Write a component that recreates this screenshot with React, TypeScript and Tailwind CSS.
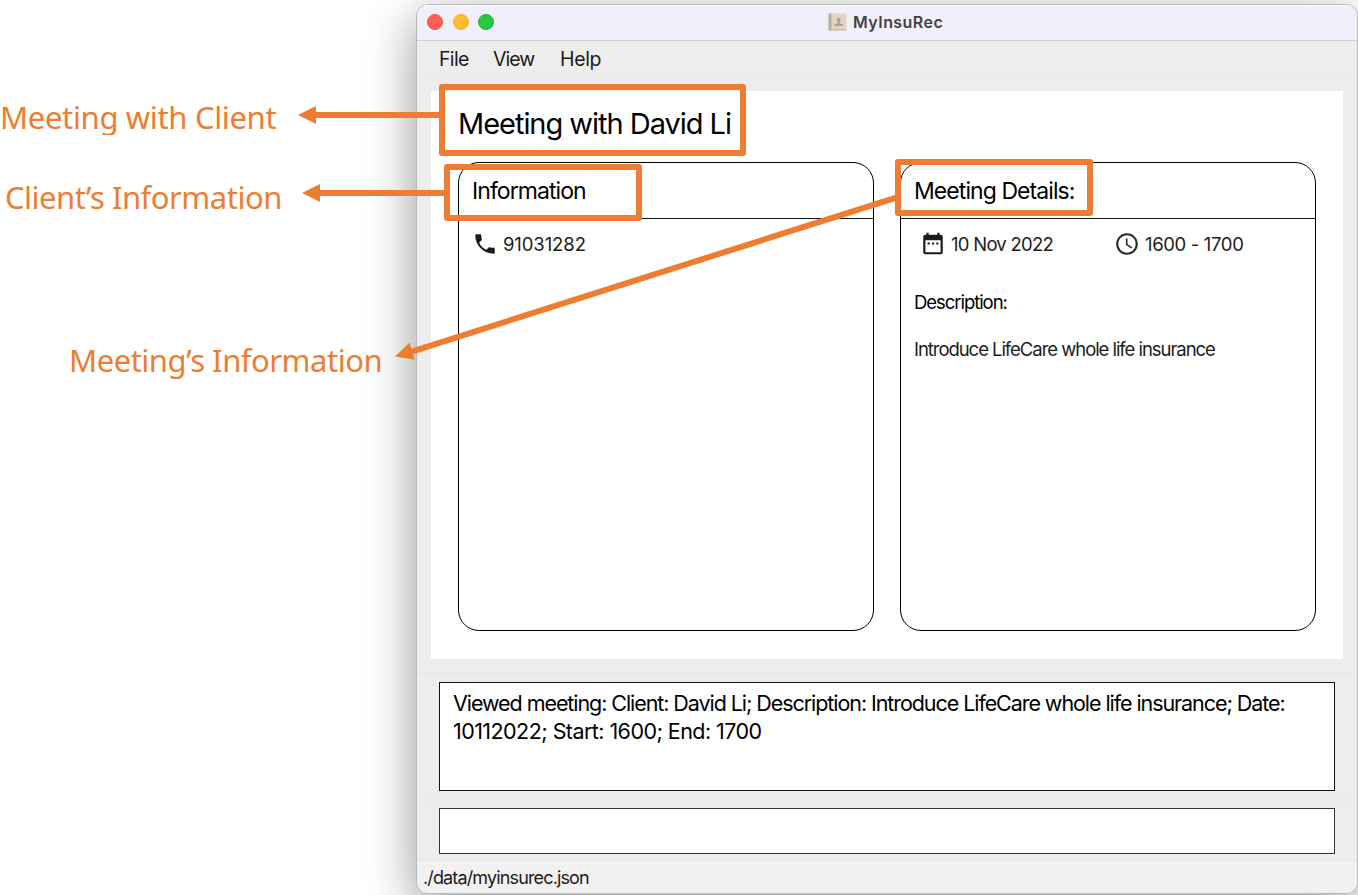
import React from "react";

function PhoneIcon() {
  return (
    <svg className="h-[26px] w-[26px] shrink-0" viewBox="0 0 24 24" fill="#1c1c1c">
      <path d="M6.62 10.79c1.44 2.83 3.76 5.14 6.59 6.59l2.2-2.2c.27-.27.67-.36 1.02-.24 1.12.37 2.33.57 3.57.57.55 0 1 .45 1 1V20c0 .55-.45 1-1 1-9.39 0-17-7.61-17-17 0-.55.45-1 1-1h3.5c.55 0 1 .45 1 1 0 1.25.2 2.45.57 3.57.11.35.03.74-.25 1.02l-2.2 2.2z" />
    </svg>
  );
}

function CalendarIcon() {
  return (
    <svg className="h-[26px] w-[26px] shrink-0" viewBox="0 0 24 24" fill="#1c1c1c">
      <path d="M9 10.5H7v2h2v-2zm4 0h-2v2h2v-2zm4 0h-2v2h2v-2zm2-7h-1v-2h-2v2H8v-2H6v2H5c-1.11 0-1.99.9-1.99 2L3 19.5c0 1.1.89 2 2 2h14c1.1 0 2-.9 2-2v-14c0-1.1-.9-2-2-2zm0 16H5v-11h14v11z" />
    </svg>
  );
}

function ClockIcon() {
  return (
    <svg className="h-[26px] w-[26px] shrink-0" viewBox="0 0 24 24" fill="#2a2a2a">
      <path d="M11.99 2C6.47 2 2 6.48 2 12s4.47 10 9.99 10C17.52 22 22 17.52 22 12S17.52 2 11.99 2zM12 20c-4.42 0-8-3.58-8-8s3.58-8 8-8 8 3.58 8 8-3.58 8-8 8zm.5-13H11v6l5.25 3.15.75-1.23-4.5-2.67z" />
    </svg>
  );
}

function AppIcon() {
  return (
    <svg className="h-[18px] w-[19px] shrink-0" viewBox="0 0 19 18">
      <rect x="0.5" y="0.5" width="18" height="17" rx="1" fill="#e4d3bd" />
      <rect x="0.5" y="0.5" width="3" height="17" rx="0.5" fill="#b5afac" />
      <rect x="3.5" y="15.8" width="15" height="1.7" fill="#d0c2b2" />
      <circle cx="10.7" cy="7" r="2" fill="#a99f97" />
      <path d="M9.7 8h2v2.2l3.4 1.2v1.6H6.4v-1.6l3.3-1.2z" fill="#a99f97" />
    </svg>
  );
}

function Dot({ color }: { color: string }) {
  return <span className={`h-4 w-4 rounded-full border ${color}`} />;
}

function Card({ title, children }: { title: React.ReactNode; children: React.ReactNode }) {
  return (
    <section className="flex h-[469px] w-[416px] flex-col rounded-[21px] border-[1.33px] border-black">
      <header className="h-[56px] border-b border-[#111] pl-[13px] pt-[10px] text-[23px] leading-[36px] tracking-[-0.93px]">
        {title}
      </header>
      {children}
    </section>
  );
}

function Annotations() {
  return (
    <div className="pointer-events-none absolute inset-0 text-[31px] leading-[40px] text-[#ED7D31] font-['Noto_Sans',sans-serif]">
      <div className="absolute left-0 top-[97px] h-[38px] overflow-hidden whitespace-nowrap tracking-[-0.34px]">Meeting with Client</div>
      <div className="absolute left-[5px] top-[177px] whitespace-nowrap tracking-[-0.5px]">Client’s Information</div>
      <div className="absolute left-[69px] top-[340px] whitespace-nowrap tracking-[-0.48px]">Meeting’s Information</div>
      <div className="absolute left-[439px] top-[84px] h-[72px] w-[307px] rounded-[3px] border-[6px] border-[#ED7D31]" />
      <div className="absolute left-[444px] top-[164px] h-[57px] w-[198px] rounded-[3px] border-[6px] border-[#ED7D31]" />
      <div className="absolute left-[895px] top-[159px] h-[57px] w-[198px] rounded-[3px] border-[6px] border-[#ED7D31]" />
      <svg className="absolute left-0 top-0 h-[895px] w-[1358px]" viewBox="0 0 1358 895" fill="#ED7D31" stroke="none">
        <path d="M298 115l18-9v6h124v6H316v6z" />
        <path d="M302 193l18-9v6h125v6H320v6z" />
        <path d="M395 356.5l14.5-13.7 5.3 17z" />
        <path d="M411 351.8L897 197.3" stroke="#ED7D31" strokeWidth="6" />
      </svg>
    </div>
  );
}

export default function App() {
  return (
    <div className="relative h-[895px] w-[1358px] overflow-hidden bg-white pl-[416px] pt-1 font-['Inter','Liberation_Sans',sans-serif] text-black">
      <main className="flex h-[890px] w-[942px] flex-col overflow-hidden rounded-[12px] border border-[#b9b9b9] bg-[#ededed] shadow-[0_14px_50px_rgba(0,0,0,0.42)]">
        <div className="flex h-[36px] shrink-0 items-center border-b border-[#cfced4] border-t border-t-white bg-[#f1effa] pb-[2px] pl-[10px]">
          <div className="flex w-[401px] gap-[9.5px]">
            <Dot color="border-[#ee5148] bg-[#ff5f57]" />
            <Dot color="border-[#eeae27] bg-[#febc2e]" />
            <Dot color="border-[#1fb934] bg-[#28c840]" />
          </div>
          <AppIcon />
          <h1 className="pl-[6px] text-[16px] font-semibold leading-[20px] tracking-[0.45px] text-[#434246]">MyInsuRec</h1>
        </div>
        <nav className="flex h-[37px] shrink-0 border-b border-[#e7e7e7] pl-[22px] text-[19.5px] leading-[36px] text-[#1c1c1c]">
          <span className="w-[54px] tracking-[-0.65px]">File</span>
          <span className="w-[67px] tracking-[-1px]">View</span>
          <span className="tracking-[-0.36px]">Help</span>
        </nav>
        <div className="flex h-[596px] shrink-0 flex-col border-b-2 border-[#e9e9e9] px-[14px] pt-[13px]">
          <div className="flex h-[568px] w-[912px] flex-col bg-white pl-[27px]">
            <h2 className="h-[71px] pt-[14px] text-[29px] leading-[38px] tracking-[-1.03px]">Meeting with David Li</h2>
            <div className="flex gap-[26px]">
              <Card title="Information">
                <div className="flex items-center pl-[13px] pt-[12px] text-[18.5px] leading-[26px] text-[#1c1c1c]">
                  <PhoneIcon />
                  <span className="pl-[5px] tracking-[-0.1px]">91031282</span>
                </div>
              </Card>
              <Card title="Meeting Details:">
                <div className="flex items-center pl-[19px] pt-[12px] text-[18.5px] leading-[26px] text-[#1c1c1c]">
                  <CalendarIcon />
                  <span className="w-[168px] pl-[5px] tracking-[-0.74px]">10 Nov 2022</span>
                  <ClockIcon />
                  <span className="pl-[5px] tracking-[-0.35px]">1600 - 1700</span>
                </div>
                <div className="pl-[13px] pt-[32px] text-[18.5px] leading-[26px] tracking-[-1.05px]">
                  <p>Description:</p>
                  <p className="pt-[21px] text-[#1c1c1c]">Introduce LifeCare whole life insurance</p>
                </div>
              </Card>
            </div>
          </div>
        </div>
        <div className="h-[127px] shrink-0 border-b-2 border-[#e9e9e9] pl-[22px] pt-[8px]">
          <div className="h-[109px] w-[896px] border-[1.33px] border-[#111] bg-white pl-[13px] pt-[6px] text-[21.5px] leading-[28px]">
            <p className="whitespace-nowrap tracking-[-1.07px]">Viewed meeting: Client: David Li; Description: Introduce LifeCare whole life insurance; Date:</p>
            <p className="tracking-[-0.56px]">10112022; Start: 1600; End: 1700</p>
          </div>
        </div>
        <div className="h-[60px] shrink-0 border-b border-[#e6e6e6] pl-[22px] pt-[7px]">
          <div className="h-[46px] w-[896px] border border-[#333] bg-white" />
        </div>
        <footer className="flex-1 bg-[#f1f1f1] pl-[6px] text-[18px] leading-[33px] tracking-[-0.86px] text-[#1c1c1c]">./data/myinsurec.json</footer>
      </main>
      <Annotations />
    </div>
  );
}
